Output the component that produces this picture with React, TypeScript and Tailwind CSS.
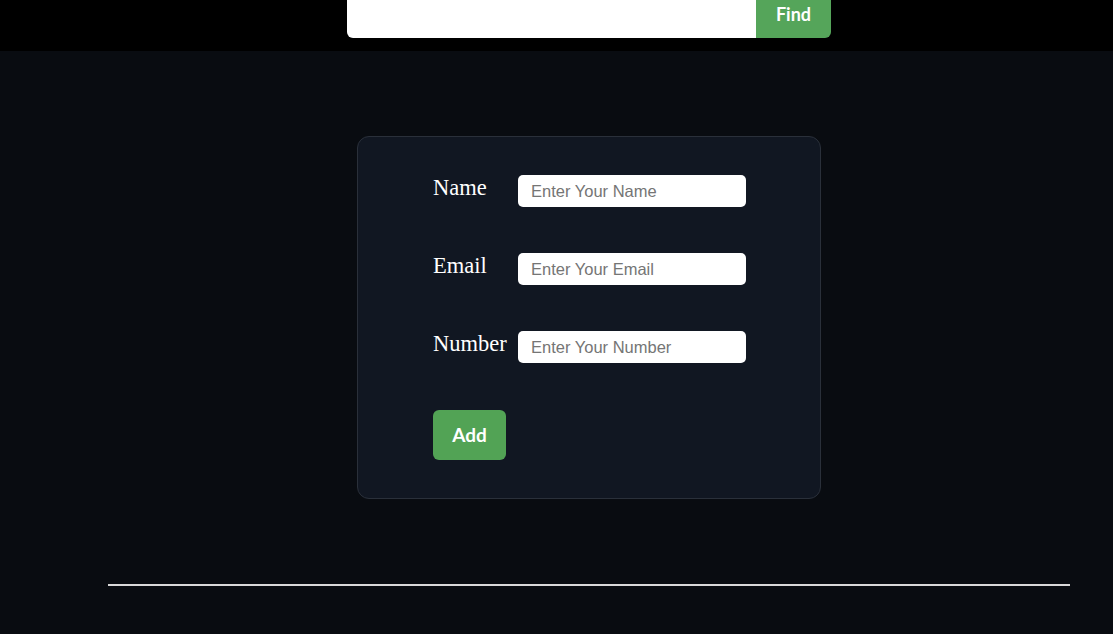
import { useState } from "react";

export default function App() {
  const [query, setQuery] = useState("");
  const [name, setName] = useState("");
  const [email, setEmail] = useState("");
  const [number, setNumber] = useState("");

  const fields = [
    { label: "Name", placeholder: "Enter Your Name", value: name, set: setName },
    { label: "Email", placeholder: "Enter Your Email", value: email, set: setEmail },
    { label: "Number", placeholder: "Enter Your Number", value: number, set: setNumber },
  ];

  return (
    <div className="min-h-screen w-full bg-[#090c11] overflow-hidden">
      {/* top search bar */}
      <div className="h-[51px] bg-black pl-[65px] flex justify-center items-end pb-[13px]">
        <div className="flex h-[42px]">
          <input
            type="text"
            value={query}
            onChange={(e) => setQuery(e.target.value)}
            className="w-[409px] h-full bg-white rounded-bl-md px-3 text-base text-black focus:outline-none font-['Liberation_Sans',Arial,sans-serif]"
          />
          <button className="w-[75px] h-full bg-[#55a55a] text-white font-bold text-lg rounded-br-md flex items-end justify-center pb-[10px] font-['Lato',sans-serif]">
            Find
          </button>
        </div>
      </div>

      <div className="pl-[65px]">
        <div className="flex justify-center pt-[85px]">
          <div className="w-[464px] h-[363px] bg-[#111722] border border-[#2a303a] rounded-xl pl-[75px] pt-[38px]">
            <div className="flex flex-col gap-[46px]">
              {fields.map((f) => (
                <div key={f.label} className="flex items-start">
                  <label className="w-[85px] text-white text-[22.5px] leading-none pt-[2px] font-['Liberation_Serif','Times_New_Roman',serif]">
                    {f.label}
                  </label>
                  <input
                    type="text"
                    placeholder={f.placeholder}
                    value={f.value}
                    onChange={(e) => f.set(e.target.value)}
                    className="w-[228px] h-[32px] bg-white rounded-[5px] pl-[13px] pr-3 text-[16.5px] text-black placeholder:text-[#757575] focus:outline-none font-['Liberation_Sans',Arial,sans-serif]"
                  />
                </div>
              ))}
            </div>
            <button className="mt-[47px] w-[73px] h-[50px] bg-[#52a355] text-white font-bold text-[19px] rounded-md font-['Lato',sans-serif]">
              Add
            </button>
          </div>
        </div>

        <div className="mx-[43px] mt-[85px] h-[2px] bg-[#d9d9d9]" />
      </div>
    </div>
  );
}
